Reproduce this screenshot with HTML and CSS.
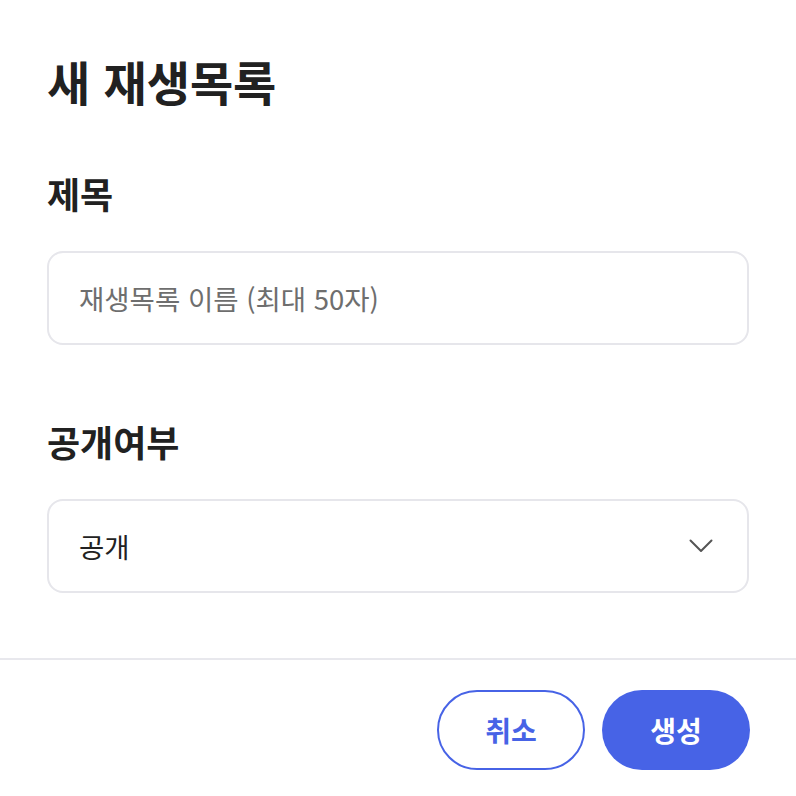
FILE: index.html
```html
<!DOCTYPE html>
<html lang="ko">
<head>
<meta charset="utf-8">
<link rel="stylesheet" href="styles.css">
</head>
<body>
<div class="dialog">
  <div class="body">
    <h1 class="title">새 재생목록</h1>
    <div class="field field-first">
      <label class="label">제목</label>
      <div class="input"><span class="placeholder">재생목록 이름 (최대 50자)</span></div>
    </div>
    <div class="field">
      <label class="label">공개여부</label>
      <div class="input select">
        <span class="value">공개</span>
        <svg class="chevron" width="24" height="14" viewBox="0 0 24 14"><path d="M1.5 1.5 L12 12 L22.5 1.5" fill="none" stroke="#555" stroke-width="2" stroke-linecap="round" stroke-linejoin="round"/></svg>
      </div>
    </div>
  </div>
  <div class="footer">
    <button class="btn btn-outline">취소</button>
    <button class="btn btn-primary">생성</button>
  </div>
</div>
</body>
</html>
```
FILE: styles.css
```css
* { box-sizing: border-box; }
html, body { margin: 0; padding: 0; background: #fff; }
body { font-family: "Noto Sans CJK KR", "Noto Sans", sans-serif; color: #212121; }
.dialog { width: 796px; height: 796px; display: flex; flex-direction: column; }
.body { padding: 51px 47px 0 47px; height: 660px; border-bottom: 2px solid #e8e8ed; }
.title { margin: 0; font-size: 47px; line-height: 60px; font-weight: 700; }
.field { display: flex; flex-direction: column; gap: 36px; margin-top: 74px; }
.field-first { margin-top: 60px; }
.label { font-size: 36px; line-height: 44px; font-weight: 700; }
.input { height: 94px; border: 2px solid #e6e6eb; border-radius: 16px; display: flex; align-items: center; padding: 0 30px; font-size: 27.5px; }
.placeholder { color: #6e6e6e; }
.value { color: #222; flex: 1; }
.select { justify-content: space-between; padding-right: 34px; }
.footer { display: flex; justify-content: flex-end; gap: 17px; padding: 30px 46px 0 0; }
.btn { width: 148px; height: 80px; border-radius: 40px; font-family: inherit; font-size: 28px; font-weight: 700; cursor: pointer; }
.btn-outline { background: #fff; border: 2px solid #4763e6; color: #4763e6; }
.btn-primary { background: #4763e6; border: none; color: #fff; }
```
